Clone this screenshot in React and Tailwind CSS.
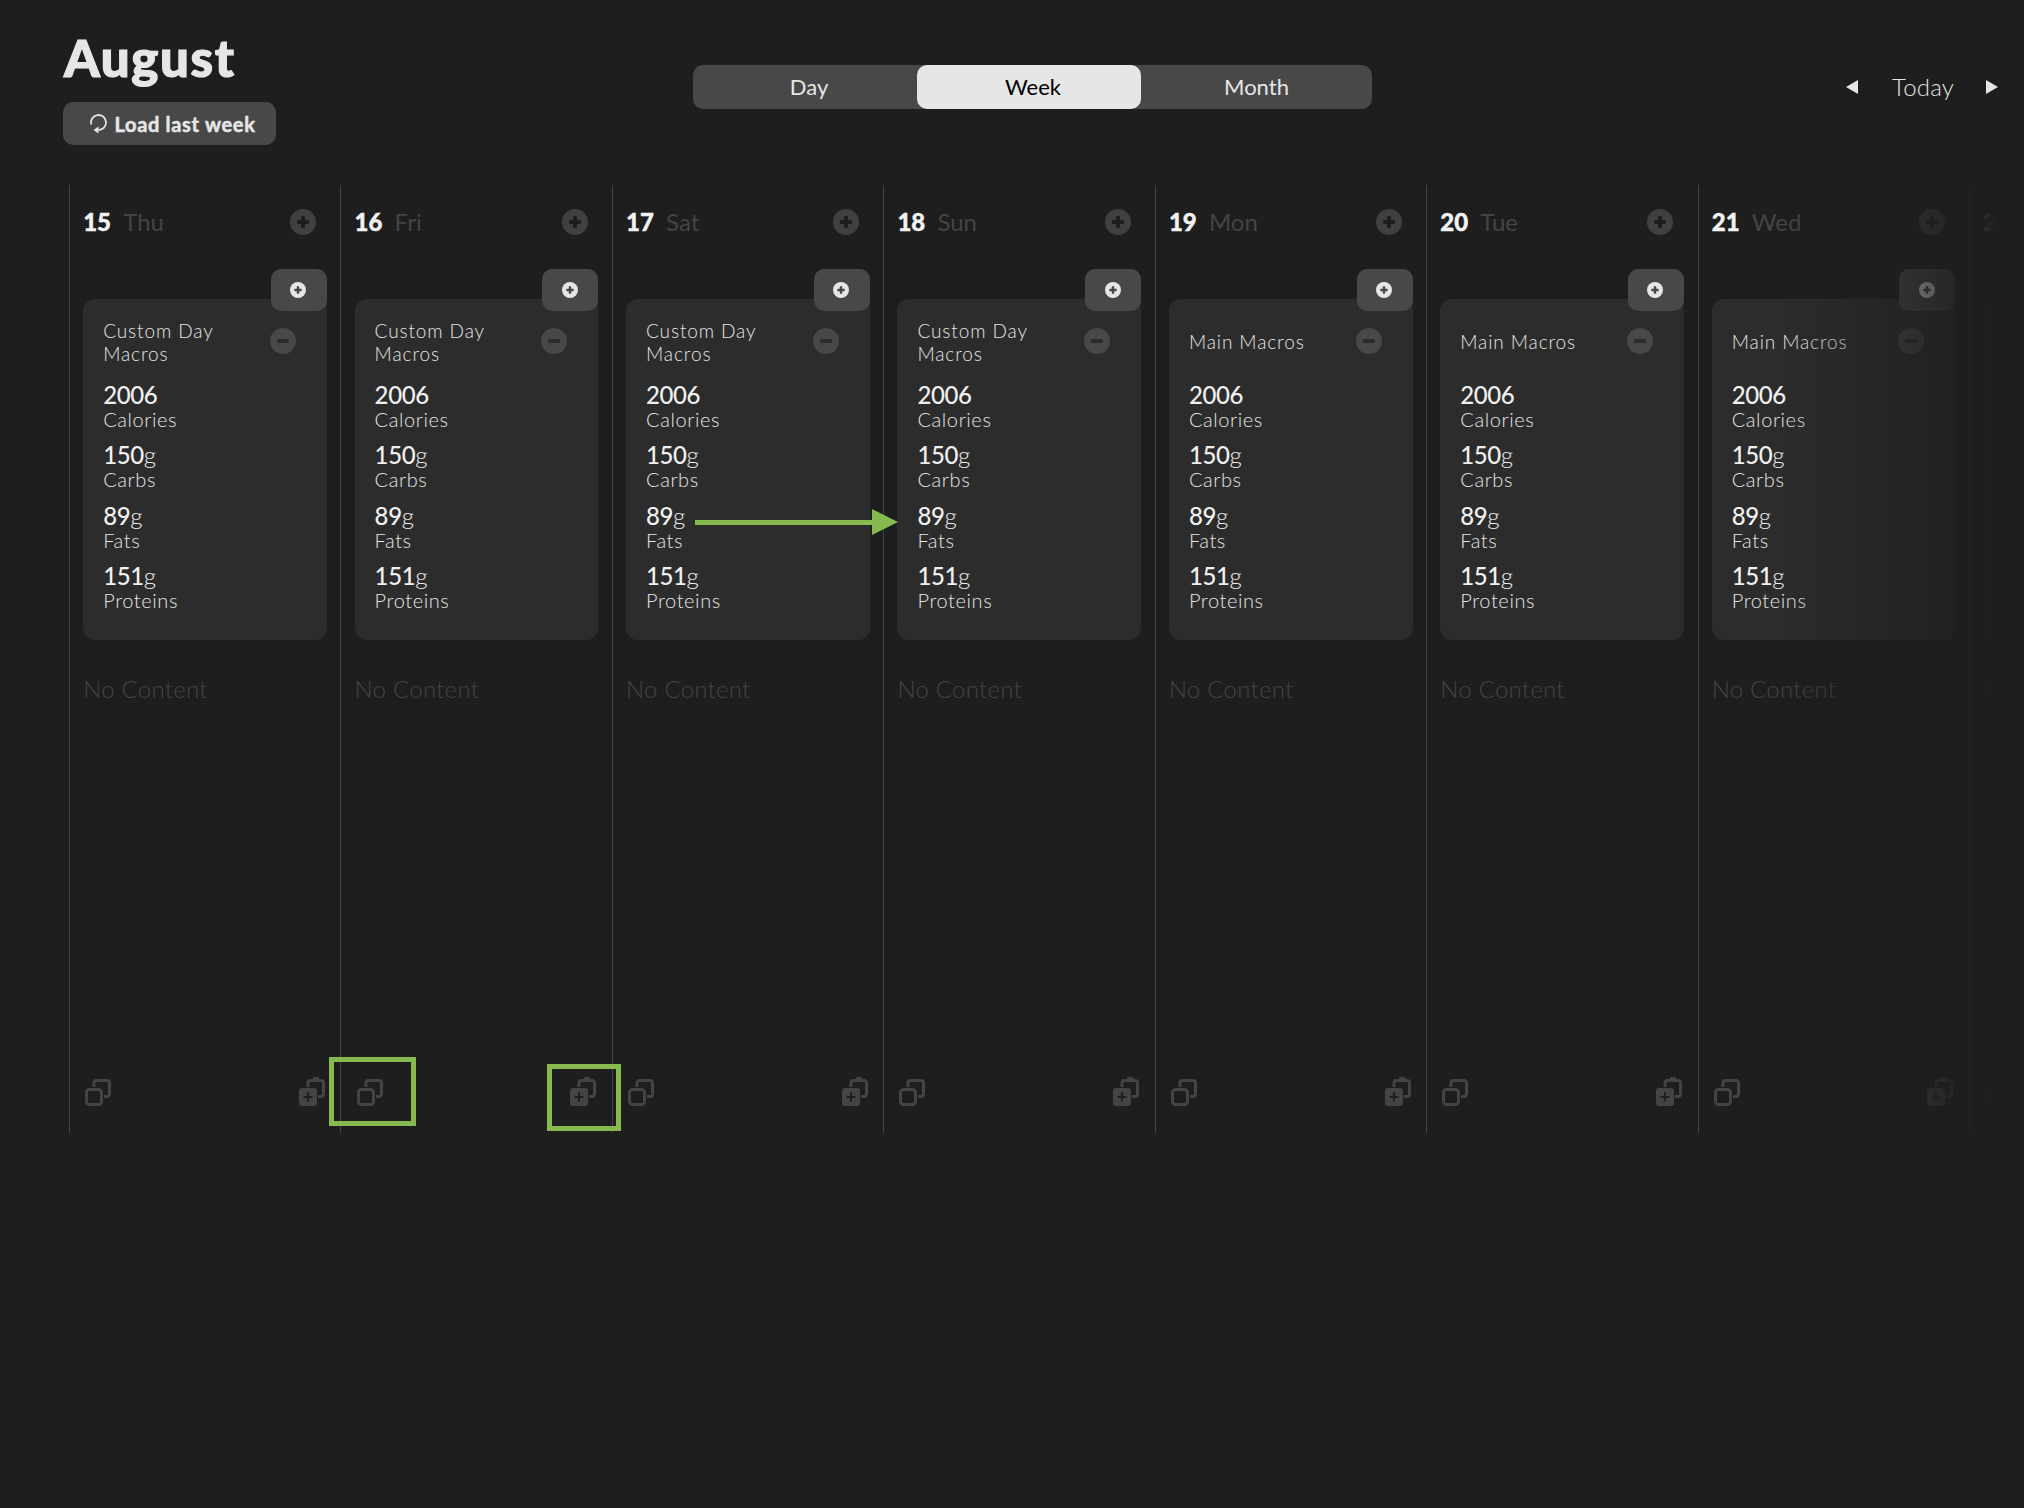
import React from "react";

const days = [
  { num: 15, name: "Thu", title: ["Custom Day", "Macros"] },
  { num: 16, name: "Fri", title: ["Custom Day", "Macros"] },
  { num: 17, name: "Sat", title: ["Custom Day", "Macros"] },
  { num: 18, name: "Sun", title: ["Custom Day", "Macros"] },
  { num: 19, name: "Mon", title: ["Main Macros"] },
  { num: 20, name: "Tue", title: ["Main Macros"] },
  { num: 21, name: "Wed", title: ["Main Macros"] },
  { num: 22, name: "Thu", title: ["Main Macros"] },
];

const stats = [
  { value: "2006", unit: "", label: "Calories" },
  { value: "150", unit: "g", label: "Carbs" },
  { value: "89", unit: "g", label: "Fats" },
  { value: "151", unit: "g", label: "Proteins" },
];

const CircleIcon = ({ size, fill, mark, minus }) => (
  <svg width={size} height={size} viewBox="0 0 26 26" className="block">
    <circle cx="13" cy="13" r="13" fill={fill} />
    <rect x="7" y="11" width="12" height="4" rx="1" fill={mark} />
    {!minus && <rect x="11" y="7" width="4" height="12" rx="1" fill={mark} />}
  </svg>
);

const CopyIcon = () => (
  <svg width="26" height="27" viewBox="0 0 26 27" fill="none" stroke="#444444" strokeWidth="3" className="block">
    <rect x="1.5" y="10.5" width="15" height="15" rx="3" />
    <path d="M9 8V4a2.5 2.5 0 0 1 2.5-2.5H22a2.5 2.5 0 0 1 2.5 2.5V15a2.5 2.5 0 0 1-2.5 2.5H19" />
  </svg>
);

const PasteIcon = () => (
  <svg width="26" height="29" viewBox="0 0 26 29" fill="none" className="block">
    <path
      d="M9 10V6a2.5 2.5 0 0 1 2.5-2.5H22a2.5 2.5 0 0 1 2.5 2.5V17a2.5 2.5 0 0 1-2.5 2.5H19"
      stroke="#444444"
      strokeWidth="3"
    />
    <rect x="14" y="0" width="6" height="3" rx="1" fill="#444444" />
    <rect x="0" y="11" width="18" height="18" rx="3" fill="#444444" />
    <path d="M9 15.5v9M4.5 20h9" stroke="#1e1e1e" strokeWidth="2" />
  </svg>
);

const ReloadIcon = () => (
  <svg width="17" height="20" viewBox="0 0 17 20" fill="none" className="block">
    <path d="M1.3 10.5A7.5 7.5 0 1 1 8.5 16" stroke="#e6e6e6" strokeWidth="1.8" />
    <path d="M8.5 12.5v7L3.5 16z" fill="#e6e6e6" />
  </svg>
);

const DayColumn = ({ day }) => (
  <div className="w-[271.43px] h-[948px] shrink-0 flex flex-col border-l border-[#444444] pl-[13.2px] pr-[13.6px] pt-[21px] pb-[27px]">
    <div className="h-8 flex items-center justify-between pr-[10.5px]">
      <div className="flex items-baseline text-2xl">
        <span className="font-black text-[#f2f2f2] w-10 [-webkit-text-stroke:0.4px_#f2f2f2]">{day.num}</span>
        <span className="font-normal text-[#444444]">{day.name}</span>
      </div>
      <CircleIcon size={26} fill="#404040" mark="#1e1e1e" />
    </div>

    <div className="relative mt-[61px] bg-[#2c2c2c] rounded-xl pl-5 pr-[31px] pt-[21px] pb-[28px]">
      <div className="absolute right-0 -top-[30px] w-14 h-[42px] bg-[#484848] rounded-[10px] flex items-center justify-center pr-[1px]">
        <CircleIcon size={16} fill="#e6e6e6" mark="#484848" />
      </div>
      <div className="h-[41px] flex items-center justify-between">
        <div className="text-[19px] leading-[23px] font-light tracking-[0.9px] text-[#e6e6e6] pt-[2px]">
          {day.title.map((line) => (
            <div key={line}>{line}</div>
          ))}
        </div>
        <CircleIcon size={26} fill="#484848" mark="#2c2c2c" minus />
      </div>
      <div className="mt-[20px] flex flex-col gap-[10.33px]">
        {stats.map((s) => (
          <div key={s.label}>
            <div className="text-2xl leading-[27px] tracking-[-0.4px] text-[#f0f0f0]">
              <span className="font-medium">{s.value}</span>
              <span className="font-light">{s.unit}</span>
            </div>
            <div className="text-[20px] leading-[23px] font-light tracking-[0.6px] text-[#e6e6e6]">{s.label}</div>
          </div>
        ))}
      </div>
    </div>

    <div className="mt-[34px] text-2xl leading-[30px] font-light tracking-[0.25px] text-[#444444]">No Content</div>

    <div className="mt-auto flex items-end justify-between pl-[2px] pr-[2px]">
      <CopyIcon />
      <PasteIcon />
    </div>
  </div>
);

const App = () => {
  return (
    <div className="relative w-[2024px] h-[1508px] overflow-hidden bg-[#1e1e1e] text-[#e6e6e6] font-['Lato',sans-serif]">
      <header className="flex h-[185px] items-start">
        <div className="w-[630px] ml-[63px] pt-[28px] shrink-0">
          <h1 className="pl-px text-[51px] leading-[60px] font-black tracking-[1.6px] text-[#e6e6e6] [-webkit-text-stroke:1.2px_#e6e6e6]">
            August
          </h1>
          <button className="mt-[14px] w-[213px] h-[43px] rounded-[10px] bg-[#484848] flex items-center justify-center gap-[7px] pl-[7px] text-xl font-bold tracking-[0.7px] text-[#e6e6e6] [-webkit-text-stroke:0.5px_#e6e6e6]">
            <ReloadIcon />
            Load last week
          </button>
        </div>

        <div className="mt-[65px] w-[679px] h-11 rounded-[10px] bg-[#484848] grid grid-cols-[224px_224px_1fr] text-[22px]">
          <div className="flex items-center justify-center pl-2 pb-[2px]">Day</div>
          <div className="flex items-center justify-center pl-2 pb-[2px] rounded-[10px] bg-[#e6e6e6] text-black">Week</div>
          <div className="flex items-center justify-center pb-[2px]">Month</div>
        </div>

        <div className="ml-auto mt-[68px] pr-[26px] flex items-center gap-8 text-2xl leading-9 font-light tracking-[0.2px] text-[#e6e6e6]">
          <svg width="12" height="14" viewBox="0 0 12 14" className="block mr-[2px]">
            <path d="M12 0v14L0 7z" fill="#e6e6e6" />
          </svg>
          <span className="pt-px">Today</span>
          <svg width="12" height="14" viewBox="0 0 12 14" className="block">
            <path d="M0 0v14l12-7z" fill="#e6e6e6" />
          </svg>
        </div>
      </header>

      <div className="relative ml-[69px] flex overflow-hidden">
        {days.map((day) => (
          <DayColumn key={day.num} day={day} />
        ))}
      </div>

      {/* fade on the right end of the strip */}
      <div className="absolute left-[1780px] right-0 top-[185px] h-[948px] bg-gradient-to-r from-[#1e1e1e00] via-[#1e1e1eee] via-[84%] to-[#1e1e1e] to-[88%]" />

      {/* green annotations on top of the screenshot */}
      <div className="absolute left-[695px] top-[520px] w-[178px] h-[5px] bg-[#86b950]" />
      <svg width="26" height="26" viewBox="0 0 26 26" className="absolute left-[872px] top-[509px]">
        <path d="M0 0v26l26-13z" fill="#86b950" />
      </svg>
      <div className="absolute left-[329px] top-[1057px] w-[87px] h-[69px] border-[5px] border-[#86b950]" />
      <div className="absolute left-[547px] top-[1064px] w-[74px] h-[67px] border-[5px] border-[#86b950]" />
    </div>
  );
};

export default App;
